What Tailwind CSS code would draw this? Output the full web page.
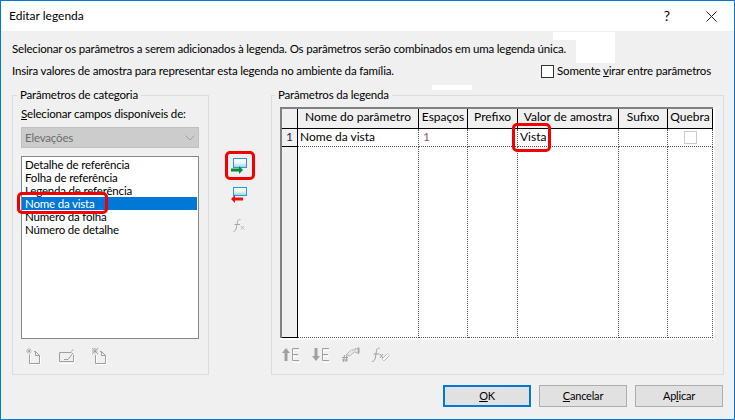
<!DOCTYPE html>
<html lang="pt">
<head>
<meta charset="UTF-8">
<title>Editar legenda</title>
<script src="https://cdn.jsdelivr.net/npm/@tailwindcss/browser@4"></script>
</head>
<body class="m-0 overflow-hidden">
<div class="relative w-[735px] h-[420px] border border-[#0078d7] bg-[#f0f0f0] font-['Lato',sans-serif] text-[11.5px] tracking-[-0.18px] leading-[16px] text-black flex flex-col">

  <!-- barra de titulo -->
  <div class="h-[30px] bg-white flex items-center pl-[8px] shrink-0 text-[12px] tracking-normal">
    <span class="flex-1">Editar legenda</span>
    <span class="w-[46px] text-center text-[14px] translate-x-[1px]">?</span>
    <svg class="mr-[17px] ml-[17px]" width="11" height="11" viewBox="0 0 11 11"><path d="M0.5 0.5L10.5 10.5M10.5 0.5L0.5 10.5" stroke="#222" stroke-width="1" fill="none"/></svg>
  </div>

  <!-- textos -->
  <div class="pl-[11px] pr-[23px] pt-[10px] shrink-0">
    <p>Selecionar os parâmetros a serem adicionados à legenda. Os parâmetros serão combinados em uma legenda única.</p>
    <div class="flex items-center justify-between mt-[6px] h-[16px]">
      <p>Insira valores de amostra para representar esta legenda no ambiente da família.</p>
      <label class="flex items-center gap-[3px]">
        <span class="w-[13px] h-[13px] border border-[#333] bg-white"></span>
        <span>Somente <u>v</u>irar entre parâmetros</span>
      </label>
    </div>
  </div>

  <!-- grupos -->
  <div class="flex pl-[11px] mt-[9px] shrink-0">
    <fieldset class="w-[197px] h-[287px] border border-[#dcdcdc] px-[8px] m-0 min-w-0">
      <legend class="px-[3px] -ml-[4px] leading-[14px]">Parâmetros de categoria</legend>
      <div class="mt-[4px]"><u>S</u>elecionar campos disponíveis de:</div>
      <div class="mt-[5px] w-[178px] h-[21px] bg-[#cccccc] border border-[#bfbfbf] flex items-center justify-between pl-[3px] pr-[3px] text-[#6d6d6d]">
        <span>Elevações</span>
        <svg width="10" height="6" viewBox="0 0 10 6"><path d="M0.5 0.5L5 5L9.5 0.5" stroke="#a3a3a3" fill="none"/></svg>
      </div>
      <div class="mt-[8px] w-[178px] h-[183px] bg-white border border-[#828790] pt-[1px] pr-[1px] leading-[13px]">
        <div class="pl-[3px]">Detalhe de referência</div>
        <div class="pl-[3px]">Folha de referência</div>
        <div class="pl-[3px]">Legenda de referência</div>
        <div class="pl-[3px] bg-[#0078d7] text-white">Nome da vista</div>
        <div class="pl-[3px]">Número da folha</div>
        <div class="pl-[3px]">Número de detalhe</div>
      </div>
      <div class="flex items-start mt-[9px] pl-[5px] gap-[17px]">
        <svg width="16" height="17" viewBox="0 0 16 17" fill="none">
          <path d="M3.500 6.500V15.500H13.500V7.500L9.500 3.500H8" stroke="#fff" transform="translate(1 1)"/>
          <path d="M3.500 6.500V15.500H13.500V7.500L9.500 3.500H8M9.500 3.500V7.500H13.500" stroke="#9f9f9f"/>
          <path d="M3 0V6M0 3H6M1 1L5 5M5 1L1 5" stroke="#9f9f9f" stroke-dasharray="1 0.5"/>
        </svg>
        <svg width="16" height="15" viewBox="0 0 16 15" fill="none" class="mt-[1px]">
          <path d="M14.500 6V13.500H0.500" stroke="#fff" transform="translate(1 1)"/>
          <path d="M12.500 3.500H0.500V12.500H14.500V6" stroke="#9f9f9f"/>
          <path d="M5 10.500H9L14 4M12.500 2.500L14 0.500" stroke="#9f9f9f"/>
        </svg>
        <svg width="16" height="17" viewBox="0 0 16 17" fill="none">
          <path d="M3.500 6.500V15.500H13.500V7.500L9.500 3.500H8" stroke="#fff" transform="translate(1 1)"/>
          <path d="M3.500 7V15.500H13.500V7.500L9.500 3.500H8M9.500 3.500V7.500H13.500" stroke="#9f9f9f"/>
          <path d="M0 0L6 6M6 0L0 6M0 3H6M3 0V6" stroke="#9f9f9f" stroke-width="1.200" stroke-dasharray="1 0.5"/>
        </svg>
      </div>
    </fieldset>

    <!-- botoes do meio -->
    <div class="w-[62px] flex flex-col pt-[70px] pl-[22px]">
      <svg width="16" height="16" viewBox="0 0 16 16">
        <defs><linearGradient id="azul" x1="0" y1="0" x2="0" y2="1"><stop offset="0" stop-color="#ffffff"/><stop offset="0.5" stop-color="#eaf6fc"/><stop offset="1" stop-color="#93d3f2"/></linearGradient></defs>
        <rect x="2.500" y="0.500" width="13" height="9" fill="url(#azul)" stroke="#2a9ad8"/>
        <path d="M0 10.500H8V8L12 12L8 16V13.500H0Z" fill="#0b8a3a"/>
      </svg>
      <svg class="mt-[13px]" width="16" height="16" viewBox="0 0 16 16">
        <rect x="2.500" y="0.500" width="13" height="8" fill="url(#azul)" stroke="#2a9ad8"/>
        <path d="M12 10.500H4V8L0 12L4 16V13.500H12Z" fill="#ee1111"/>
      </svg>
      <svg class="mt-[16px] ml-[2px]" width="13" height="13" viewBox="0 0 13 13" fill="none" stroke="#a8a8a8">
        <path d="M0.500 12.500C2.500 12.500 3 11 3.500 8L4.500 2.500C5 1 5.500 0.500 7.500 0.500M1.500 5.500H7"/>
        <path d="M8 7L11 10.500M11 7L8 10.500" stroke="#bbb"/>
      </svg>
    </div>

    <fieldset class="w-[453px] h-[287px] border border-[#dcdcdc] px-[8px] m-0 min-w-0">
      <legend class="px-[3px] -ml-[5px] leading-[14px]">Parâmetros da legenda</legend>
      <div class="mt-[5px] w-[435px] h-[233px] border-r-2 border-b-2 border-white text-[12px] tracking-normal">
        <div class="h-full border-t-2 border-l-2 border-[#808080] bg-white flex flex-col">
          <div class="flex h-[20px] shrink-0 bg-[#f0f0f0] border-b border-black text-center">
            <div class="w-[16px] border-r border-black"></div>
            <div class="w-[121px] border-r border-black">Nome do parâmetro</div>
            <div class="w-[49px] border-r border-black">Espaços</div>
            <div class="w-[50px] border-r border-black">Prefixo</div>
            <div class="w-[101px] border-r border-black">Valor de amostra</div>
            <div class="w-[49px] border-r border-black">Sufixo</div>
            <div class="w-[45px] border-r border-black">Quebra</div>
          </div>
          <div class="flex h-[18px] shrink-0">
            <div class="w-[16px] bg-[#f0f0f0] border-r border-b border-black text-right pr-[4px] text-[#3a1a4a]">1</div>
            <div class="w-[121px] border-r border-b border-dotted border-[#555] pl-[2px]">Nome da vista</div>
            <div class="w-[49px] border-r border-b border-dotted border-[#555] pl-[4px] text-[#8a5a8a]">1</div>
            <div class="w-[50px] border-r border-b border-dotted border-[#555]"></div>
            <div class="w-[101px] border-r border-b border-dotted border-[#555] pl-[2px]">Vista</div>
            <div class="w-[49px] border-r border-b border-dotted border-[#555]"></div>
            <div class="w-[45px] border-r border-b border-dotted border-[#555] flex items-center justify-center"><span class="w-[13px] h-[13px] border border-[#ccc] bg-white"></span></div>
          </div>
          <div class="flex flex-1">
            <div class="w-[16px] bg-[#f0f0f0] border-r border-b border-black"></div>
            <div class="w-[121px] border-r border-b border-dotted border-[#555]"></div>
            <div class="w-[49px] border-r border-b border-dotted border-[#555]"></div>
            <div class="w-[50px] border-r border-b border-dotted border-[#555]"></div>
            <div class="w-[101px] border-r border-b border-dotted border-[#555]"></div>
            <div class="w-[49px] border-r border-b border-dotted border-[#555]"></div>
            <div class="w-[45px] border-r border-b border-dotted border-[#555]"></div>
          </div>
        </div>
      </div>
      <div class="flex items-start mt-[7px] pl-[2px] gap-[12px]">
        <svg width="18" height="16" viewBox="0 0 18 16" fill="none">
          <path d="M10.500 2.500H17M10.500 2.500V14.500H17M10.500 8.500H16" stroke="#fff" transform="translate(1 1)"/>
          <path d="M4 14V4" stroke="#a0a0a0" stroke-width="3"/>
          <path d="M0 6L4 1L8 6Z" fill="#a0a0a0"/>
          <path d="M10.500 1.500H17M10.500 1.500V13.500H17M10.500 7.500H16" stroke="#a0a0a0"/>
        </svg>
        <svg width="18" height="16" viewBox="0 0 18 16" fill="none">
          <path d="M10.500 2.500H17M10.500 2.500V14.500H17M10.500 8.500H16" stroke="#fff" transform="translate(1 1)"/>
          <path d="M4 1V11" stroke="#a0a0a0" stroke-width="3"/>
          <path d="M0 9L4 14L8 9Z" fill="#a0a0a0"/>
          <path d="M10.500 1.500H17M10.500 1.500V13.500H17M10.500 7.500H16" stroke="#a0a0a0"/>
        </svg>
        <svg width="18" height="16" viewBox="0 0 18 16" fill="none" stroke="#a0a0a0">
          <path d="M0 10.500H6M0 13H6M2.500 8L1.500 15M5 8L4 15"/>
          <path d="M4 8L9 3H13V1.500H17V6H14V5H12L8 9Z" stroke-dasharray="1 0.600" fill="#e6e6e6"/>
          <path d="M16.500 0.500V6.500" stroke-width="1.500"/>
        </svg>
        <svg width="18" height="16" viewBox="0 0 18 16" fill="none" stroke="#a0a0a0">
          <path d="M0 14.500C2 14.500 3 13 3.500 10L4.500 3.500C5 1.500 6 1 7.500 1M1.500 7H7.500"/>
          <path d="M8 7L11 11M11 7L8 11"/>
          <path d="M10 12L15.500 6.500L17.500 8.500L12 14Z" stroke-dasharray="1 0.600" fill="#fff"/>
        </svg>
      </div>
    </fieldset>
  </div>

  <!-- botoes -->
  <div class="flex justify-end gap-[8px] pr-[11px] mt-[10px] shrink-0 text-[11px] tracking-[-0.2px]">
    <button class="w-[88px] h-[22px] bg-[#e1e1e1] border-2 border-[#0078d7]"><u>O</u>K</button>
    <button class="w-[88px] h-[22px] bg-[#e1e1e1] border border-[#adadad]"><u>C</u>ancelar</button>
    <button class="w-[88px] h-[22px] bg-[#e1e1e1] border border-[#adadad]">Ap<u>l</u>icar</button>
  </div>

  <!-- marcas vermelhas e retoques brancos por cima da captura -->
  <div class="absolute left-[224px] top-[150px] w-[30px] h-[29px] border-[3px] border-[#f00000] rounded-[5px]"></div>
  <div class="absolute left-[16px] top-[191px] w-[91px] h-[22px] border-[3px] border-[#f00000] rounded-[5px]"></div>
  <div class="absolute left-[511px] top-[122px] w-[39px] h-[29px] border-[3px] border-[#f00000] rounded-[5px]"></div>
  <div class="absolute left-[552px] top-[31px] w-[62px] h-[8px] bg-white"></div>
  <div class="absolute left-[575px] top-[39px] w-[39px] h-[23px] bg-white"></div>
  <div class="absolute left-[431px] top-[84px] w-[40px] h-[5px] bg-white"></div>
</div>
</body>
</html>
